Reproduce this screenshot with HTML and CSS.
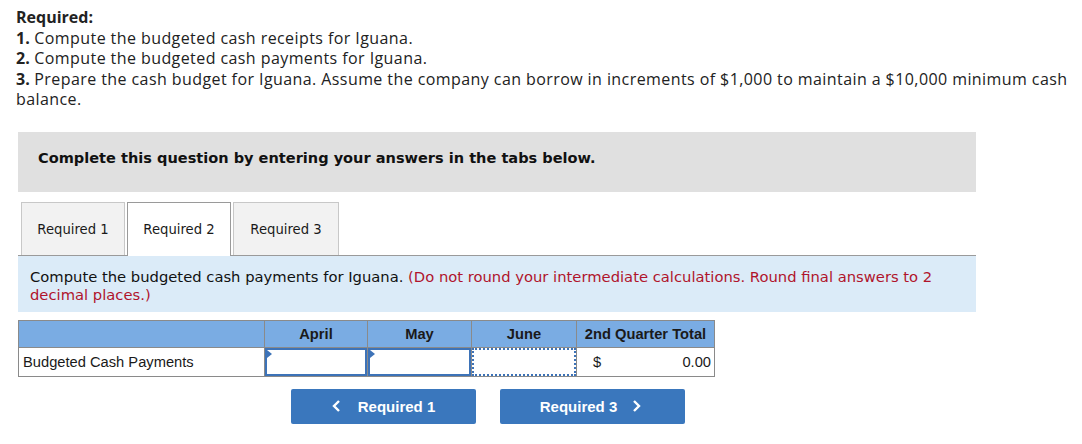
FILE: index.html
```html
<!DOCTYPE html>
<html>
<head>
<meta charset="utf-8">
<link rel="stylesheet" href="styles.css">
</head>
<body>
<div class="req">
  <div class="req-title">Required:</div>
  <div><b>1.</b> Compute the budgeted cash receipts for Iguana.</div>
  <div><b>2.</b> Compute the budgeted cash payments for Iguana.</div>
  <div><b>3.</b> Prepare the cash budget for Iguana. Assume the company can borrow in increments of $1,000 to maintain a $10,000 minimum cash balance.</div>
</div>

<div class="banner">Complete this question by entering your answers in the tabs below.</div>

<div class="tabs">
  <div class="tab">Required 1</div>
  <div class="tab active">Required 2</div>
  <div class="tab">Required 3</div>
</div>

<div class="instr">Compute the budgeted cash payments for Iguana. <span class="red">(Do not round your intermediate calculations. Round final answers to 2 decimal places.)</span></div>

<table class="grid">
  <tr class="head">
    <th class="c-label"></th>
    <th class="c-apr">April</th>
    <th class="c-may">May</th>
    <th class="c-jun">June</th>
    <th class="c-tot">2nd Quarter Total</th>
  </tr>
  <tr class="row">
    <td class="label">Budgeted Cash Payments</td>
    <td class="in"><div class="box"><span class="tri"></span></div></td>
    <td class="in"><div class="box"><span class="tri"></span></div></td>
    <td class="in"><div class="box dotted"></div></td>
    <td class="tot"><div class="totwrap"><span>$</span><span>0.00</span></div></td>
  </tr>
</table>

<div class="nav">
  <button class="btn"><svg class="chev" width="9" height="12" viewBox="0 0 9 12"><path d="M7 1 L2 6 L7 11" fill="none" stroke="#fff" stroke-width="2.4"/></svg>Required 1</button>
  <button class="btn btn-next">Required 3<svg class="chev" width="9" height="12" viewBox="0 0 9 12"><path d="M2 1 L7 6 L2 11" fill="none" stroke="#fff" stroke-width="2.4"/></svg></button>
</div>
</body>
</html>
```

FILE: styles.css
```css
html, body { margin: 0; padding: 0; background: #fff; }
body { padding: 7px 0 0 16px; }

.req {
  font-family: "Open Sans", "Lato", sans-serif;
  font-size: 16px;
  letter-spacing: 0.42px;
  line-height: 20.5px;
  color: #222;
  width: 1060px;
}
.req-title { font-weight: bold; letter-spacing: 0; }
.req b { font-weight: bold; letter-spacing: 0; }

.banner {
  margin: 22px 0 0 2px;
  width: 958px;
  height: 60px;
  box-sizing: border-box;
  padding: 17px 20px 0 20px;
  background: #e0e0e0;
  font-family: "DejaVu Sans", Verdana, sans-serif;
  font-weight: bold;
  font-size: 14.55px;
  color: #111;
}

.tabs {
  display: flex;
  margin: 10px 0 0 2px;
  padding-left: 3px;
  width: 955px;
  border-bottom: 1px solid #9a9a9a;
  gap: 2px;
  font-family: "DejaVu Sans", Verdana, sans-serif;
  font-size: 13.2px;
  color: #1a1a1a;
}
.tab {
  width: 104px;
  height: 53px;
  box-sizing: border-box;
  border: 1px solid #c8c8c8;
  border-bottom: none;
  background: #f2f2f2;
  display: flex;
  align-items: center;
  justify-content: center;
  padding-top: 2px;
}
.tab.active {
  background: #fff;
  border-color: #9a9a9a;
  height: 54px;
  margin-bottom: -1px;
  padding-top: 1px;
}
.tab:last-child { width: 106px; }

.instr {
  margin-left: 2px;
  width: 958px;
  box-sizing: border-box;
  height: 56px;
  padding: 12px 12px 0 12px;
  background: #dbebf8;
  font-family: "DejaVu Sans", Verdana, sans-serif;
  font-size: 14.75px;
  line-height: 18px;
  color: #111;
}
.red { color: #b0142c; }

.grid {
  margin: 8px 0 0 2px;
  border-collapse: collapse;
  font-family: "Liberation Sans", Arial, sans-serif;
  font-size: 14.7px;
  color: #1a1a1a;
}
.grid th, .grid td {
  border: 1px solid #8a8a8a;
  padding: 0;
}
.head th {
  background: #7aace3;
  height: 26px;
  font-weight: bold;
  text-align: center;
}
.c-label { width: 245px; }
.c-apr { width: 102px; }
.c-may { width: 103px; }
.c-jun { width: 104px; }
.c-tot { width: 137px; }
.row td { height: 28px; }
.label { padding-left: 4px !important; }
.box {
  height: 28px;
  box-sizing: border-box;
  border: 2px solid #3d73b8;
  position: relative;
}
.box.dotted {
  border: 2px dotted #3d73b8;
}
.tri {
  position: absolute;
  left: 0;
  top: 0;
  width: 0;
  height: 0;
  border-top: 4px solid transparent;
  border-bottom: 4px solid transparent;
  border-left: 5px solid #3d73b8;
}
.totwrap {
  display: flex;
  justify-content: space-between;
  padding: 0 3px 0 16px;
}

.nav {
  display: flex;
  gap: 24px;
  margin: 12px 0 0 275px;
}
.btn {
  width: 185px;
  height: 35px;
  border: none;
  border-radius: 2px;
  background: #3a77bd;
  color: #fff;
  font-family: "Liberation Sans", Arial, sans-serif;
  font-weight: bold;
  font-size: 15px;
  padding: 0;
  display: flex;
  align-items: center;
  justify-content: center;
  gap: 17px;
}
.btn-next { gap: 15px; padding-right: 4px; }
.chev { display: block; }
```
